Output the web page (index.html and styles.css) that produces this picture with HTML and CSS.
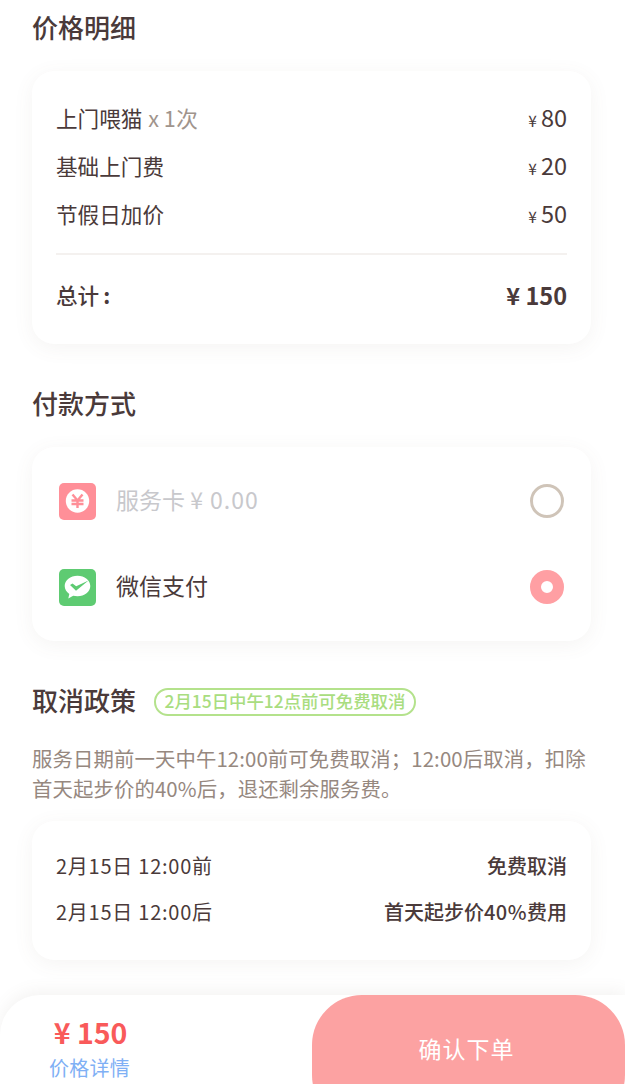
FILE: index.html
```html
<!DOCTYPE html>
<html lang="zh-CN">
<head>
  <meta charset="UTF-8">
  <meta name="viewport" content="width=device-width, initial-scale=1.0">
  <title>确认订单</title>
  <link rel="stylesheet" href="styles.css">
</head>
<body>
  <div class="page">
    <main class="content">
      <h2 class="section-title first">价格明细</h2>
      <section class="card price-card">
        <div class="row"><span>上门喂猫 <em>x <i class="num">1</i>次</em></span><span class="amount"><small>¥</small>80</span></div>
        <div class="row"><span>基础上门费</span><span class="amount"><small>¥</small>20</span></div>
        <div class="row"><span>节假日加价</span><span class="amount"><small>¥</small>50</span></div>
        <div class="total"><span>总计<i class="colon">:</i></span><span class="total-num">¥ 150</span></div>
      </section>

      <h2 class="section-title">付款方式</h2>
      <section class="card pay-card">
        <div class="pay-row disabled">
          <svg class="pay-icon" viewBox="0 0 37 37">
            <rect width="37" height="37" rx="5" fill="#ff8f98"/>
            <circle cx="18.5" cy="18" r="11.7" fill="#fff"/>
            <path d="M13.500 11.500l5 6 5-6M12.500 17.500h12M12.500 21h12M18.500 17v8" fill="none" stroke="#ff8f98" stroke-width="2.4"/>
          </svg>
          <span class="pay-name">服务卡 <i class="num-wide">¥ 0.00</i></span>
          <span class="radio"></span>
        </div>
        <div class="pay-row">
          <svg class="pay-icon" viewBox="0 0 37 37">
            <rect width="37" height="37" rx="5" fill="#5ecb72"/>
            <path d="M18.500 6.700C11.400 6.700 5.700 11.300 5.700 17c0 3.200 1.800 6 4.600 7.900L9.300 29.500l4.900-2.700c1.300.3 2.800.5 4.300.5 7.100 0 12.800-4.600 12.800-10.300S25.600 6.700 18.500 6.700z" fill="#fff"/>
            <path d="M11 16l2.500-1.500 3.700 2.700L29.500 11.500 17 21.800z" fill="#5ecb72"/>
          </svg>
          <span class="pay-name">微信支付</span>
          <span class="radio checked"></span>
        </div>
      </section>

      <div class="policy-head">
        <h2 class="section-title">取消政策</h2>
        <span class="badge">2月15日中午12点前可免费取消</span>
      </div>
      <p class="policy-text">服务日期前一天中午12:00前可免费取消；12:00后取消，扣除首天起步价的40%后，退还剩余服务费。</p>
      <section class="card policy-card">
        <div class="policy-row"><span class="policy-date">2月15日 12:00前</span><strong>免费取消</strong></div>
        <div class="policy-row"><span class="policy-date">2月15日 12:00后</span><strong>首天起步价<i class="num">40%</i>费用</strong></div>
      </section>
    </main>

    <footer class="bottom-bar">
      <div class="bar-price">
        <div class="bar-total">¥ 150</div>
        <a class="bar-detail">价格详情</a>
      </div>
      <button class="confirm" type="button">确认下单</button>
    </footer>
  </div>
</body>
</html>
```

FILE: styles.css
```css
* {
  box-sizing: border-box;
}

html, body {
  margin: 0;
  padding: 0;
}

body {
  font-family: "Noto Sans CJK SC", "Noto Sans", sans-serif;
  color: #4a3a3a;
  background-color: #fff;
}

i {
  font-style: normal;
}

.num {
  letter-spacing: 0.5px;
}

.num-wide {
  letter-spacing: 1px;
}

.page {
  width: 625px;
  height: 1084px;
  overflow: hidden;
  display: flex;
  flex-direction: column;
}

.content {
  padding: 0 34px 0 32px;
  height: 995px;
}

.section-title {
  margin: 0;
  font-size: 26px;
  line-height: 36px;
  font-weight: 500;
  color: #4a3a3a;
  padding: 41px 0 2px;
}

.section-title.first {
  padding-top: 9px;
}

.card {
  background-color: #fff;
  border-radius: 22px;
  box-shadow: 0 4px 20px rgba(120, 100, 90, 0.07);
}

.price-card {
  margin-top: 24px;
  height: 273px;
  padding: 24px 24px 0;
}

.row {
  display: flex;
  justify-content: space-between;
  align-items: center;
  height: 48px;
  padding-bottom: 4px;
  font-size: 21.6px;
}

.row em {
  font-style: normal;
  color: #a0948c;
  margin-left: 1px;
}

.amount {
  font-size: 23.5px;
}

.amount small {
  font-size: 15.5px;
  margin-right: 4px;
}

.total {
  display: flex;
  justify-content: space-between;
  align-items: center;
  margin-top: 14px;
  padding-top: 16px;
  border-top: 2px solid #f4f1ef;
  font-size: 21.6px;
  line-height: 48px;
  font-weight: 500;
}

.colon {
  margin-left: 4px;
  font-weight: 700;
}

.total-num {
  font-size: 23.5px;
  font-weight: 700;
}

.pay-card {
  margin-top: 24px;
  height: 194px;
  padding: 11px 27px;
}

.pay-row {
  display: flex;
  align-items: center;
  height: 86px;
}

.pay-icon {
  width: 37px;
  height: 37px;
  flex-shrink: 0;
}

.pay-name {
  margin-left: 20px;
  flex: 1;
  font-size: 23px;
  padding-bottom: 4px;
}

.disabled .pay-name {
  color: #c8c8cc;
}

.radio {
  width: 34px;
  height: 34px;
  border-radius: 50%;
  border: 3px solid #cfc4b8;
}

.radio.checked {
  border: 11px solid #ff9fa3;
  background-color: #fff;
}

.policy-head {
  display: flex;
  align-items: center;
  margin-top: 41px;
}

.policy-head .section-title {
  padding: 0 0 4px;
}

.badge {
  margin-left: 18px;
  height: 28px;
  line-height: 22px;
  padding: 0 8.500px;
  border: 2px solid #b4e28c;
  border-radius: 14px;
  font-size: 17.4px;
  font-weight: 500;
  color: #a9dd80;
  white-space: nowrap;
}

.policy-text {
  margin: 21px 0 0;
  font-size: 20.4px;
  line-height: 30px;
  letter-spacing: 0.1px;
  color: #96887f;
}

.policy-card {
  margin-top: 18px;
  height: 139px;
  padding: 23px 24px;
}

.policy-row {
  display: flex;
  justify-content: space-between;
  align-items: center;
  height: 46px;
  padding-bottom: 4px;
  font-size: 20px;
}

.policy-date {
  letter-spacing: 0.75px;
}

.policy-row strong {
  font-weight: 500;
}

.bottom-bar {
  flex: 1;
  display: flex;
  background-color: #fff;
  border-radius: 40px 0 0 0;
  box-shadow: 0 -4px 16px rgba(120, 100, 90, 0.08);
  overflow: hidden;
}

.bar-price {
  width: 312px;
  padding-top: 18px;
  text-align: center;
  flex-shrink: 0;
}

.bar-total {
  width: 181px;
  font-size: 28.5px;
  line-height: 38px;
  font-weight: 700;
  color: #f95a5a;
}

.bar-detail {
  display: block;
  width: 179px;
  margin-top: 2px;
  font-size: 20px;
  line-height: 29px;
  letter-spacing: 0.2px;
  color: #7fb0f5;
}

.confirm {
  flex: 1;
  height: 130px;
  border: none;
  border-radius: 50px;
  background-color: #fca2a2;
  color: #fff;
  font-family: inherit;
  font-size: 23px;
  letter-spacing: 1px;
  display: flex;
  justify-content: center;
  padding: 36px 4px 0 0;
  line-height: 34px;
}
```
